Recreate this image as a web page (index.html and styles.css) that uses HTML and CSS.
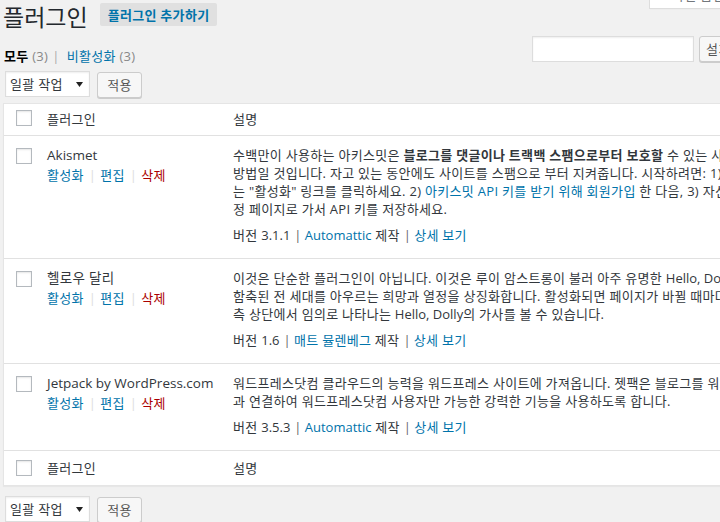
FILE: index.html
```html
<!DOCTYPE html>
<html lang="ko">
<head>
    <meta charset="UTF-8">
    <meta name="viewport" content="width=device-width, initial-scale=1.0">
    <title>플러그인</title>
    <link rel="stylesheet" href="styles.css">
</head>
<body>
<div class="wrap">
    <div class="title-row">
        <h1>플러그인</h1>
        <a class="add-new" href="#">플러그인 추가하기</a>
        <button class="screen-tab">화면 옵션 ▾</button>
    </div>

    <div class="filter-row">
        <ul class="subsubsub">
            <li class="current">모두 <span class="count">(3)</span></li>
            <li class="sep">|</li>
            <li><a href="#">비활성화</a> <span class="count">(3)</span></li>
        </ul>
        <form class="search-box">
            <input type="search" class="search-input">
            <button type="button" class="button search-btn">설치된 플러그인 검색</button>
        </form>
    </div>

    <div class="tablenav">
        <div class="select-wrap">
            <select class="bulk"><option>일괄 작업</option></select>
            <svg class="arrow" width="7" height="5" viewBox="0 0 7 5"><path d="M0 0h7L3.5 5z" fill="#222"/></svg>
        </div>
        <button type="button" class="button">적용</button>
    </div>

    <table class="plugins">
        <colgroup>
            <col class="col-check">
            <col class="col-name">
            <col>
        </colgroup>
        <thead>
            <tr>
                <td class="check"><input type="checkbox"></td>
                <th>플러그인</th>
                <th>설명</th>
            </tr>
        </thead>
        <tbody>
            <tr>
                <td class="check"><input type="checkbox"></td>
                <td class="name">
                    <div class="plugin-title en">Akismet</div>
                    <div class="row-actions">
                        <a href="#">활성화</a><span class="sep">|</span><a href="#">편집</a><span class="sep">|</span><a href="#" class="delete">삭제</a>
                    </div>
                </td>
                <td class="desc">
                    <p>수백만이 사용하는 아키스밋은 <strong>블로그를 댓글이나 트랙백 스팸으로부터 보호할</strong> 수 있는 사실상 최고의<br>
                    방법일 것입니다. 자고 있는 동안에도 사이트를 스팸으로 부터 지켜줍니다. 시작하려면: 1) 아키스밋 플러그인 왼쪽에 있<br>
                    는 "활성화" 링크를 클릭하세요. 2) <a href="#">아키스밋 API 키를 받기 위해 회원가입</a> 한 다음, 3) 자신의 아키스밋 설<br>
                    정 페이지로 가서 API 키를 저장하세요.</p>
                    <div class="meta">버전 <span class="en">3.1.1</span><span class="vsep">|</span><a href="#" class="en">Automattic</a> 제작<span class="vsep">|</span><a href="#">상세 보기</a></div>
                </td>
            </tr>
            <tr>
                <td class="check"><input type="checkbox"></td>
                <td class="name">
                    <div class="plugin-title">헬로우 달리</div>
                    <div class="row-actions">
                        <a href="#">활성화</a><span class="sep">|</span><a href="#">편집</a><span class="sep">|</span><a href="#" class="delete">삭제</a>
                    </div>
                </td>
                <td class="desc">
                    <p>이것은 단순한 플러그인이 아닙니다. 이것은 루이 암스트롱이 불러 아주 유명한 <span class="en">Hello, Dolly</span> 두 단어로<br>
                    함축된 전 세대를 아우르는 희망과 열정을 상징화합니다. 활성화되면 페이지가 바뀔 때마다 관리자 화면 우<br>
                    측 상단에서 임의로 나타나는 <span class="en">Hello, Dolly</span>의 가사를 볼 수 있습니다.</p>
                    <div class="meta">버전 <span class="en">1.6</span><span class="vsep">|</span><a href="#">매트 뮬렌베그</a> 제작<span class="vsep">|</span><a href="#">상세 보기</a></div>
                </td>
            </tr>
            <tr>
                <td class="check"><input type="checkbox"></td>
                <td class="name">
                    <div class="plugin-title en">Jetpack by WordPress.com</div>
                    <div class="row-actions">
                        <a href="#">활성화</a><span class="sep">|</span><a href="#">편집</a><span class="sep">|</span><a href="#" class="delete">삭제</a>
                    </div>
                </td>
                <td class="desc">
                    <p>워드프레스닷컴 클라우드의 능력을 워드프레스 사이트에 가져옵니다. 젯팩은 블로그를 워드프레스닷컴 계정<br>
                    과 연결하여 워드프레스닷컴 사용자만 가능한 강력한 기능을 사용하도록 합니다.</p>
                    <div class="meta">버전 <span class="en">3.5.3</span><span class="vsep">|</span><a href="#" class="en">Automattic</a> 제작<span class="vsep">|</span><a href="#">상세 보기</a></div>
                </td>
            </tr>
        </tbody>
        <tfoot>
            <tr>
                <td class="check"><input type="checkbox"></td>
                <th>플러그인</th>
                <th>설명</th>
            </tr>
        </tfoot>
    </table>

    <div class="tablenav bottom">
        <div class="select-wrap">
            <select class="bulk"><option>일괄 작업</option></select>
            <svg class="arrow" width="7" height="5" viewBox="0 0 7 5"><path d="M0 0h7L3.5 5z" fill="#222"/></svg>
        </div>
        <button type="button" class="button">적용</button>
    </div>
</div>
</body>
</html>
```

FILE: styles.css
```css
html, body {
    margin: 0;
    padding: 0;
}
body {
    background-color: #f1f1f1;
    color: #444;
    font-family: "Open Sans", "Noto Sans CJK KR", sans-serif;
    font-size: 13px;
    line-height: 1.4;
    letter-spacing: 0.3px;
    overflow: hidden;
}
a {
    color: #0073aa;
    text-decoration: none;
}
.en {
    letter-spacing: 0;
}
.wrap {
    width: 846px;
    margin-left: 3px;
}

/* title */
.title-row {
    display: flex;
    align-items: flex-start;
    height: 32px;
}
h1 {
    margin: 3px 0 0;
    font-size: 23px;
    font-weight: 400;
    line-height: 29px;
    color: #23282d;
    letter-spacing: 0;
}
.add-new {
    margin: 3px 0 0 12px;
    padding: 3px 8px 2px;
    line-height: 18px;
    background-color: #e0e0e0;
    border-radius: 2px;
    font-weight: 600;
    letter-spacing: 0.3px;
}
.screen-tab {
    margin: -19px 90px 0 auto;
    width: 110px;
    height: 28px;
    padding: 0 0 0 22px;
    text-align: left;
    background-color: #fff;
    border: 1px solid #ddd;
    border-top: none;
    box-shadow: 0 1px 1px -1px rgba(0,0,0,0.1);
    font-family: inherit;
    font-size: 13px;
    letter-spacing: inherit;
    color: #72777c;
}

/* filters + search */
.filter-row {
    display: flex;
    align-items: flex-start;
    height: 26px;
    margin-top: 4px;
}
.subsubsub {
    display: flex;
    list-style: none;
    margin: 0;
    padding: 11px 0 0 1px;
    line-height: 18px;
}
.subsubsub .current {
    color: #000;
    font-weight: 600;
}
.subsubsub .count {
    color: #888;
    font-weight: 400;
}
.subsubsub .sep {
    margin: 0 7px 0 4px;
    color: #aaa;
}
.search-box {
    display: flex;
    gap: 5px;
    margin: 0 0 0 auto;
}
.search-input {
    width: 162px;
    height: 26px;
    box-sizing: border-box;
    border: 1px solid #ddd;
    background-color: #fff;
    box-shadow: inset 0 1px 2px rgba(0,0,0,0.07);
    margin: 0;
}
.button {
    height: 26px;
    box-sizing: border-box;
    padding: 0 10px 1px;
    background-color: #f7f7f7;
    border: 1px solid #ccc;
    border-radius: 3px;
    box-shadow: 0 1px 0 #ccc;
    color: #555;
    font-family: inherit;
    font-size: 13px;
    letter-spacing: inherit;
    line-height: 24px;
}
.search-btn {
    width: 150px;
    text-align: left;
    padding-left: 6px;
}

/* bulk actions */
.tablenav {
    display: flex;
    align-items: flex-start;
    gap: 7px;
    height: 26px;
    margin-top: 9px;
    padding-left: 2px;
}
.tablenav .button {
    width: 45px;
    margin-top: 1px;
    padding: 0;
    text-align: center;
}
.tablenav.bottom {
    margin-top: 10px;
}
.select-wrap {
    display: grid;
}
.bulk {
    grid-area: 1 / 1;
    width: 85px;
    height: 26px;
    margin: 0;
    padding: 0 16px 0 4px;
    appearance: none;
    -webkit-appearance: none;
    background-color: #fff;
    border: 1px solid #ddd;
    border-radius: 0;
    box-shadow: inset 0 1px 2px rgba(0,0,0,0.07);
    color: #32373c;
    font-family: inherit;
    font-size: 13px;
    letter-spacing: inherit;
}
.arrow {
    grid-area: 1 / 1;
    justify-self: end;
    align-self: center;
    margin-right: 7px;
}

/* table */
.plugins {
    width: 100%;
    margin-top: 6px;
    border: 1px solid #e5e5e5;
    border-spacing: 0;
    background-color: #fff;
    box-shadow: 0 1px 1px rgba(0,0,0,0.04);
    table-layout: fixed;
}
.col-check {
    width: 33px;
}
.col-name {
    width: 186px;
}
.plugins th {
    padding: 7px 10px 8px;
    line-height: 16px;
    font-weight: 400;
    text-align: left;
    color: #32373c;
}
.plugins thead th, .plugins thead td {
    border-bottom: 1px solid #e1e1e1;
}
.plugins tfoot th {
    padding: 8px 10px;
    line-height: 18px;
}
.plugins td.check {
    padding: 6px 0 0 12px;
    vertical-align: top;
}
.plugins tbody td {
    padding: 10px 10px 14px;
    line-height: 18px;
    vertical-align: top;
    border-bottom: 1px solid #e1e1e1;
    color: #32373c;
}
.plugins tbody td.check {
    padding: 12px 0 0 12px;
}
.plugins tfoot td.check {
    padding-top: 9px;
}
input[type="checkbox"] {
    appearance: none;
    -webkit-appearance: none;
    display: block;
    width: 16px;
    height: 16px;
    margin: 0;
    border: 1px solid #b4b9be;
    background-color: #fff;
    box-shadow: inset 0 1px 2px rgba(0,0,0,0.1);
}
.plugin-title {
    font-size: 13.5px;
    color: #32373c;
    white-space: nowrap;
}
.row-actions {
    margin-top: 2px;
    white-space: nowrap;
}
.row-actions .sep {
    margin: 0 4px 0 5px;
    color: #ddd;
}
.row-actions .delete {
    color: #a00;
}
.desc p {
    margin: 0 0 8px;
    white-space: nowrap;
}
.desc strong {
    font-weight: 600;
}
.meta {
    white-space: nowrap;
}
.meta .vsep {
    margin: 0 3px 0 4px;
    color: #666;
}
```
